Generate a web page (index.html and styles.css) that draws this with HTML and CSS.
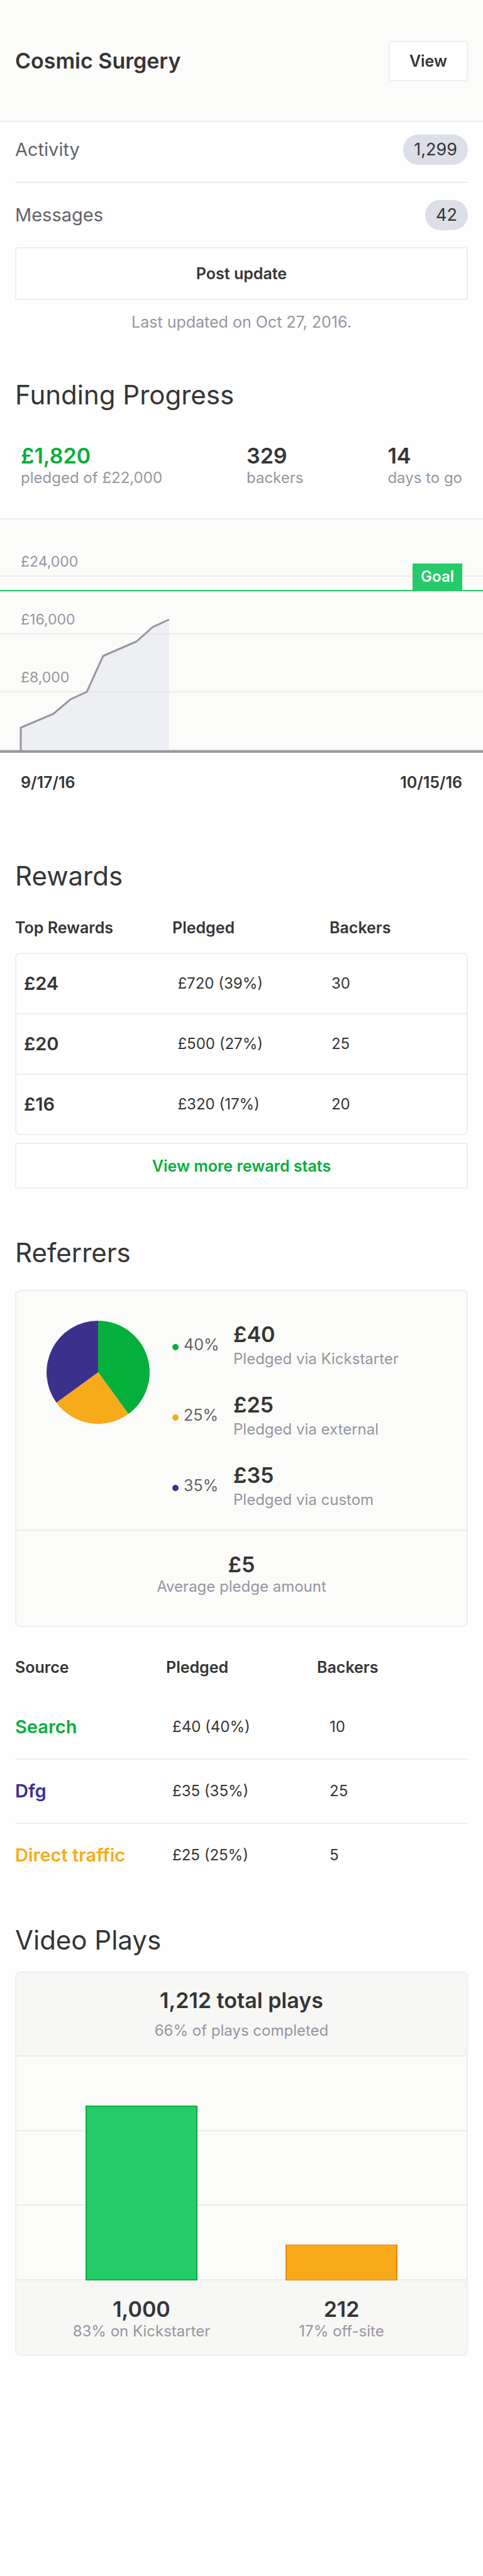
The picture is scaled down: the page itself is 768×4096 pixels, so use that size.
FILE: index.html
```html
<!DOCTYPE html>
<html lang="en">
<head>
<meta charset="utf-8">
<meta name="viewport" content="width=device-width, initial-scale=1">
<title>Cosmic Surgery</title>
<link rel="stylesheet" href="styles.css">
</head>
<body>
<header class="topbar">
  <h1 class="title">Cosmic Surgery</h1>
  <button class="btn btn-view" type="button">View</button>
</header>
<main>
  <section class="wrap">
    <ul class="nav">
      <li><a class="nav-row" href="#activity"><span>Activity</span><span class="badge">1,299</span></a></li>
      <li><a class="nav-row" href="#messages"><span>Messages</span><span class="badge">42</span></a></li>
    </ul>
    <button class="btn btn-post" type="button">Post update</button>
    <p class="caption updated">Last updated on Oct 27, 2016.</p>
  </section>

  <section class="funding">
    <h2 class="heading inset">Funding Progress</h2>
    <div class="stats">
      <div><p class="value green">£1,820</p><p class="caption">pledged of £22,000</p></div>
      <div><p class="value">329</p><p class="caption">backers</p></div>
      <div><p class="value">14</p><p class="caption">days to go</p></div>
    </div>
    <div class="chart">
      <div class="chart-grid">
        <div class="chart-row">£24,000</div>
        <div class="chart-row">£16,000</div>
        <div class="chart-row">£8,000</div>
        <div class="chart-row"></div>
      </div>
      <svg class="chart-plot" viewBox="0 0 768 367" preserveAspectRatio="none" aria-hidden="true">
        <path class="plot-area" d="M33 367V331L85 309L112 286L138 274L164 217L217 194L243 171L269 159V367Z"/>
        <path class="plot-line" d="M33 367V331L85 309L112 286L138 274L164 217L217 194L243 171L269 159"/>
      </svg>
      <div class="goal"><span class="goal-tag">Goal</span></div>
    </div>
    <div class="dates"><span>9/17/16</span><span>10/15/16</span></div>
  </section>

  <section class="wrap rewards">
    <h2 class="heading">Rewards</h2>
    <table class="table table-rewards">
      <thead><tr><th scope="col">Top Rewards</th><th scope="col">Pledged</th><th scope="col">Backers</th></tr></thead>
      <tbody>
        <tr><td class="lead">£24</td><td>£720 (39%)</td><td>30</td></tr>
        <tr><td class="lead">£20</td><td>£500 (27%)</td><td>25</td></tr>
        <tr><td class="lead">£16</td><td>£320 (17%)</td><td>20</td></tr>
      </tbody>
    </table>
    <button class="btn btn-more" type="button">View more reward stats</button>
  </section>

  <section class="wrap referrers">
    <h2 class="heading">Referrers</h2>
    <div class="card">
      <div class="breakdown">
        <svg class="pie" viewBox="-82 -82 164 164" role="img" aria-label="Pledges by referrer">
          <path fill="#05af3c" d="M0 0V-82A82 82 0 0 1 48.2 66.3Z"/>
          <path fill="#f8ab1a" d="M0 0L48.2 66.3A82 82 0 0 1 -66.3 48.2Z"/>
          <path fill="#3b318c" d="M0 0L-66.3 48.2A82 82 0 0 1 0 -82Z"/>
        </svg>
        <ul class="legend">
          <li><span class="percent"><i class="dot dot-green"></i>40%</span><div><p class="value">£40</p><p class="caption via">Pledged via Kickstarter</p></div></li>
          <li><span class="percent"><i class="dot dot-orange"></i>25%</span><div><p class="value">£25</p><p class="caption via">Pledged via external</p></div></li>
          <li><span class="percent"><i class="dot dot-purple"></i>35%</span><div><p class="value">£35</p><p class="caption via">Pledged via custom</p></div></li>
        </ul>
      </div>
      <div class="average"><p class="value">£5</p><p class="caption">Average pledge amount</p></div>
    </div>
    <table class="table table-sources">
      <thead><tr><th scope="col">Source</th><th scope="col">Pledged</th><th scope="col">Backers</th></tr></thead>
      <tbody>
        <tr><td class="lead green">Search</td><td>£40 (40%)</td><td>10</td></tr>
        <tr><td class="lead purple">Dfg</td><td>£35 (35%)</td><td>25</td></tr>
        <tr><td class="lead orange">Direct traffic</td><td>£25 (25%)</td><td>5</td></tr>
      </tbody>
    </table>
  </section>

  <section class="wrap video">
    <h2 class="heading">Video Plays</h2>
    <div class="card">
      <div class="plays-head"><p class="value">1,212 total plays</p><p class="caption">66% of plays completed</p></div>
      <div class="plays-chart">
        <div class="plays-grid"><div></div><div></div><div></div></div>
        <div class="bars">
          <div class="bar bar-green" style="height:78%"></div>
          <div class="bar bar-orange" style="height:16%"></div>
        </div>
      </div>
      <div class="plays-foot">
        <div><p class="value">1,000</p><p class="caption">83% on Kickstarter</p></div>
        <div><p class="value">212</p><p class="caption">17% off-site</p></div>
      </div>
    </div>
  </section>
</main>
</body>
</html>
```
FILE: styles.css
```css
:root {
  --ink: #353535;
  --muted: #9696a0;
  --line: #eeeef2;
  --grid: #ececeb;
  --paper: #fbfbf9;
  --paper-dark: #f7f7f5;
  --green: #05af3c;
  --green-light: #25cb68;
  --orange: #f8ab1a;
  --purple: #3b318c;
}

* { box-sizing: border-box; }

body {
  margin: 0;
  background: #fefefe;
  color: var(--ink);
  font: 24px/32px Inter, "Liberation Sans", sans-serif;
}

h1, h2, p, ul { margin: 0; padding: 0; }
ul { list-style: none; }

.wrap { padding: 0 24px; }
.green { color: var(--green); }
.orange { color: var(--orange); }
.purple { color: var(--purple); }

.heading { font-size: 42px; line-height: 52px; font-weight: 400; }
.inset { padding: 0 24px; }
.value { font-size: 34px; line-height: 36px; font-weight: 600; }
.caption { padding-top: 1px; color: var(--muted); }

.btn {
  display: block;
  background: #fff;
  border: 2px solid var(--line);
  border-radius: 4px;
  color: var(--ink);
  font: 600 25px/32px Inter, "Liberation Sans", sans-serif;
}

/* Top bar */
.topbar {
  display: flex;
  align-items: center;
  justify-content: space-between;
  padding: 65px 24px 63px;
  background: var(--paper);
  border-bottom: 2px solid var(--grid);
}
.title { font-size: 34px; line-height: 40px; font-weight: 600; }
.btn-view { height: 64px; padding: 0 31px; }

/* Activity and messages */
.nav-row {
  display: flex;
  align-items: center;
  justify-content: space-between;
  padding: 27px 0;
  color: #636369;
  font-size: 29px;
  text-decoration: none;
}
.nav li:first-child .nav-row { padding-top: 20px; border-bottom: 2px solid var(--grid); }
.badge {
  padding: 0 17px;
  border-radius: 24px;
  background: #dcdee8;
  color: var(--ink);
  font-size: 27px;
  line-height: 48px;
}
.btn-post { width: 100%; height: 84px; }
.updated { margin-top: 18px; font-size: 25px; text-align: center; }

/* Funding */
.funding { margin-top: 74px; }
.stats {
  display: flex;
  justify-content: space-between;
  padding: 53px 33px 48px;
}
.chart {
  display: grid;
  border-top: 2px solid var(--grid);
  border-bottom: 4px solid var(--muted);
  background: var(--paper);
}
.chart-grid, .chart-plot, .goal { grid-area: 1 / 1; }
.chart-row {
  display: flex;
  align-items: flex-end;
  height: 92px;
  padding: 0 33px 8px;
  border-bottom: 2px solid var(--grid);
  color: var(--muted);
  font-size: 23px;
  line-height: 28px;
}
.chart-row:first-child { height: 91px; }
.chart-plot { width: 100%; height: 367px; }
.plot-area { fill: #dcdee8; fill-opacity: 0.4; }
.plot-line { fill: none; stroke: var(--muted); stroke-width: 3px; vector-effect: non-scaling-stroke; }
.goal {
  display: flex;
  justify-content: flex-end;
  align-self: start;
  margin-top: 70px;
  padding: 0 33px;
  border-bottom: 2px solid var(--green-light);
}
.goal-tag {
  padding: 0 13px;
  background: var(--green-light);
  color: #fff;
  font-weight: 600;
  line-height: 42px;
}
.dates {
  display: flex;
  justify-content: space-between;
  padding: 31px 33px 0;
  font-size: 25px;
  font-weight: 600;
}

/* Tables */
.table, .table thead, .table tbody { display: block; }
.table tr { display: grid; grid-template-columns: 25fr 25fr 22fr; align-items: center; }
.table th, .table td { padding: 0; text-align: left; }
.table th { font-size: 25px; font-weight: 600; }
.table .lead { font-size: 29px; font-weight: 600; white-space: nowrap; }

.rewards { margin-top: 107px; }
.table-rewards { margin-top: 40px; }
.table-rewards tbody { margin-top: 24px; border: 2px solid var(--line); border-radius: 8px; }
.table-rewards tbody tr { height: 96px; padding-left: 12px; border-bottom: 2px solid var(--line); }
.table-rewards tbody tr:last-child { height: 94px; border-bottom: 0; }
.btn-more { width: 100%; height: 73px; margin-top: 12px; color: var(--green); }

.table-sources { margin-top: 48px; }
.table-sources thead tr { grid-template-columns: repeat(3, 1fr); }
.table-sources tbody { margin-top: 29px; }
.table-sources tbody tr { height: 102px; border-bottom: 2px solid var(--line); }
.table-sources tbody tr:last-child { height: 100px; border-bottom: 0; }

/* Referrers */
.referrers { margin-top: 76px; }
.card { border: 2px solid var(--line); border-radius: 8px; background: var(--paper); overflow: hidden; }
.referrers .card { margin-top: 33px; }
.breakdown {
  display: flex;
  align-items: flex-start;
  gap: 36px;
  padding: 47px 24px 27px 48px;
  border-bottom: 2px solid var(--grid);
}
.pie { width: 164px; height: 164px; flex: none; }
.legend { display: grid; gap: 35px; padding-top: 4px; }
.legend li { display: grid; grid-template-columns: 97px 1fr; }
.percent {
  display: flex;
  align-items: baseline;
  gap: 8px;
  color: #636369;
  font-size: 25px;
  line-height: 68px;
}
.dot { width: 10px; height: 10px; border-radius: 50%; }
.dot-green { background: var(--green); }
.dot-orange { background: var(--orange); }
.dot-purple { background: var(--purple); }
.via { line-height: 40px; }
.average { padding: 36px 24px 46px; text-align: center; }

/* Video plays */
.video { margin-top: 59px; padding-bottom: 96px; }
.video .card { margin-top: 24px; text-align: center; }
.plays-head {
  padding: 26px 24px 23px;
  border-bottom: 2px solid var(--grid);
  background: var(--paper-dark);
}
.plays-head .caption { margin-top: 13px; }
.plays-chart { display: grid; height: 356px; }
.plays-grid, .bars { grid-area: 1 / 1; }
.plays-grid { display: grid; grid-template-rows: repeat(3, 1fr); }
.plays-grid div { border-bottom: 2px solid var(--grid); }
.bars, .plays-foot { display: grid; grid-template-columns: 1fr 1fr; padding: 0 40px; }
.bars { align-items: end; justify-items: center; }
.bar { width: 56%; border: 2px solid; }
.bar-green { background: var(--green-light); border-color: var(--green); }
.bar-orange { background: var(--orange); border-color: #e8850f; border-top-width: 1px; border-bottom-width: 1px; }
.plays-foot { padding-top: 28px; padding-bottom: 21px; background: var(--paper-dark); }
```
